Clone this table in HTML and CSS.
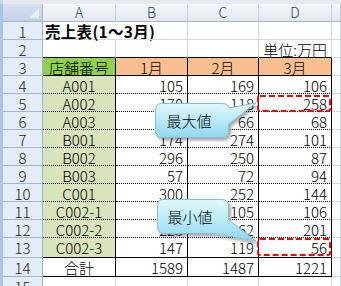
FILE: index.html
```html
<!DOCTYPE html>
<html lang="ja">
<head>
<meta charset="utf-8">
<title>売上表</title>
<link rel="stylesheet" href="styles.css">
</head>
<body>
<div class="sheet">
  <div class="topbar"></div>
  <div class="grid">
    <div class="corner"></div>
    <div class="ch">A</div><div class="ch">B</div><div class="ch">C</div><div class="ch">D</div><div class="ch"></div>

    <div class="rh">1</div>
    <div class="c title">売上表(1～3月)</div><div class="c"></div><div class="c"></div><div class="c"></div><div class="c"></div>

    <div class="rh">2</div>
    <div class="c bb"></div><div class="c bb"></div><div class="c bb"></div><div class="c bb num">単位:万円</div><div class="c"></div>

    <div class="rh">3</div>
    <div class="c hg rb bb ctr">店舗番号</div><div class="c ho rb bb ctr">1月</div><div class="c ho rb bb ctr">2月</div><div class="c ho rb bb ctr">3月</div><div class="c"></div>

    <div class="rh">4</div>
    <div class="c code rb bd">A001</div><div class="c num rb bd">105</div><div class="c num rb bd">169</div><div class="c num rb bd">106</div><div class="c"></div>

    <div class="rh">5</div>
    <div class="c code rb bd">A002</div><div class="c num rb bd">170</div><div class="c num rb bd">118</div><div class="c num rb bd">258</div><div class="c"></div>

    <div class="rh">6</div>
    <div class="c code rb bd">A003</div><div class="c num rb bd">60</div><div class="c num rb bd">66</div><div class="c num rb bd">68</div><div class="c"></div>

    <div class="rh">7</div>
    <div class="c code rb bd">B001</div><div class="c num rb bd">174</div><div class="c num rb bd">274</div><div class="c num rb bd">101</div><div class="c"></div>

    <div class="rh">8</div>
    <div class="c code rb bd">B002</div><div class="c num rb bd">296</div><div class="c num rb bd">250</div><div class="c num rb bd">87</div><div class="c"></div>

    <div class="rh">9</div>
    <div class="c code rb bd">B003</div><div class="c num rb bd">57</div><div class="c num rb bd">72</div><div class="c num rb bd">94</div><div class="c"></div>

    <div class="rh">10</div>
    <div class="c code rb bd">C001</div><div class="c num rb bd">300</div><div class="c num rb bd">252</div><div class="c num rb bd">144</div><div class="c"></div>

    <div class="rh">11</div>
    <div class="c code rb bd">C002-1</div><div class="c num rb bd">55</div><div class="c num rb bd">105</div><div class="c num rb bd">106</div><div class="c"></div>

    <div class="rh">12</div>
    <div class="c code rb bd">C002-2</div><div class="c num rb bd">225</div><div class="c num rb bd">62</div><div class="c num rb bd">201</div><div class="c"></div>

    <div class="rh">13</div>
    <div class="c code rb bb">C002-3</div><div class="c num rb bb">147</div><div class="c num rb bb">119</div><div class="c num rb bb">56</div><div class="c"></div>

    <div class="rh">14</div>
    <div class="c rb bb ctr">合計</div><div class="c num rb bb">1589</div><div class="c num rb bb">1487</div><div class="c num rb bb">1221</div><div class="c"></div>

    <div class="rh">15</div>
    <div class="c"></div><div class="c"></div><div class="c"></div><div class="c"></div><div class="c"></div>
  </div>

  <svg class="overlay" width="341" height="286" viewBox="0 0 341 286">
    <defs>
      <linearGradient id="cg" x1="0" y1="0" x2="0" y2="1">
        <stop offset="0" stop-color="#e4f7fd"/>
        <stop offset="0.55" stop-color="#b6e8f8"/>
        <stop offset="1" stop-color="#92d6ef"/>
      </linearGradient>
      <filter id="sh" x="-20%" y="-20%" width="150%" height="160%">
        <feDropShadow dx="2" dy="2.5" stdDeviation="1.4" flood-color="#000" flood-opacity="0.35"/>
      </filter>
    </defs>
    <rect class="mark" x="258" y="96" width="72" height="15" rx="2"/>
    <rect class="mark" x="258" y="239" width="72" height="16" rx="2"/>
    <path class="bubble" d="M161.5,103.5 H222 Q228.5,103.5 228.5,108 L256,103 L228.5,124 V131 Q228.5,137.5 222,137.5 H161.5 Q155.5,137.5 155.5,131 V110 Q155.5,103.5 161.5,103.5 Z"/>
    <text class="btext" x="189" y="120">最大値</text>
    <path class="bubble" d="M163.5,199.5 H222 Q228.5,199.5 228.5,206 V220 L256,241 L214,233.5 H163.5 Q157.5,233.5 157.5,227 V206 Q157.5,199.5 163.5,199.5 Z"/>
    <text class="btext" x="190" y="216">最小値</text>
  </svg>
</div>
</body>
</html>
```

FILE: styles.css
```css
html, body {
  margin: 0;
  padding: 0;
  background: #ffffff;
}

.sheet {
  position: relative;
  width: 341px;
  height: 286px;
  overflow: hidden;
  font-family: "Noto Sans CJK JP", "Noto Sans", sans-serif;
  font-size: 15px;
  font-weight: 300;
  color: #000;
}

.topbar {
  height: 4px;
  background: #e6eaf0;
  border-left: 3px solid #c5d5ea;
  box-sizing: border-box;
}

.grid {
  display: grid;
  grid-template-columns: 40px 73px 72px 71px 73px 1fr;
  grid-template-rows: 18px repeat(12, 18px) 20px 19px 1fr;
  height: 282px;
  border-left: 3px solid #a9c4ea;
}

.grid > div {
  box-sizing: border-box;
  white-space: nowrap;
  line-height: 19px;
}

.corner {
  background: linear-gradient(#d5e0ef, #c2d1e6);
  border-right: 1px solid #9eb6ce;
  border-bottom: 1px solid #9eb6ce;
  position: relative;
}

.corner::after {
  content: "";
  position: absolute;
  right: 3px;
  bottom: 3px;
  width: 0;
  height: 0;
  border-left: 10px solid transparent;
  border-bottom: 10px solid #e9eff7;
}

.ch {
  background: linear-gradient(#f5f8fb, #e2e8f0);
  border-right: 1px solid #c3cfdd;
  border-bottom: 1px solid #9eb6ce;
  text-align: center;
  color: #2a3f57;
  font-size: 14px;
  line-height: 17px !important;
}

.rh {
  background: #e4ecf7;
  border-right: 1px solid #9eb6ce;
  border-bottom: 1px solid #9eb6ce;
  text-align: center;
  color: #222;
}

.c {
  border-right: 1px solid #d0d7e5;
  border-bottom: 1px solid #d0d7e5;
}

.title {
  font-weight: bold;
  font-size: 15.5px;
  border-right: none;
  padding-left: 2px;
  letter-spacing: 0.3px;
}

.num {
  text-align: right;
  padding-right: 4px;
}

.ctr {
  text-align: center;
}

.code {
  text-align: center;
  background: #d8e4bc;
}

.hg {
  background: #92d050;
}

.ho {
  background: #fabf8f;
}

.rb {
  border-right: 1px solid #000;
}

.bb {
  border-bottom: 1px solid #000;
}

.bd {
  border-bottom: 1px dotted #000;
}

.overlay {
  position: absolute;
  left: 0;
  top: 0;
  pointer-events: none;
}

.mark {
  fill: none;
  stroke: #ff0000;
  stroke-width: 2;
  stroke-dasharray: 6 3;
}

.bubble {
  fill: url(#cg);
  stroke: #7cc2db;
  stroke-width: 1;
  filter: url(#sh);
}

.btext {
  font-family: "Noto Sans CJK JP", sans-serif;
  font-size: 15px;
  font-weight: 300;
  text-anchor: middle;
  dominant-baseline: central;
  fill: #000;
}
```
